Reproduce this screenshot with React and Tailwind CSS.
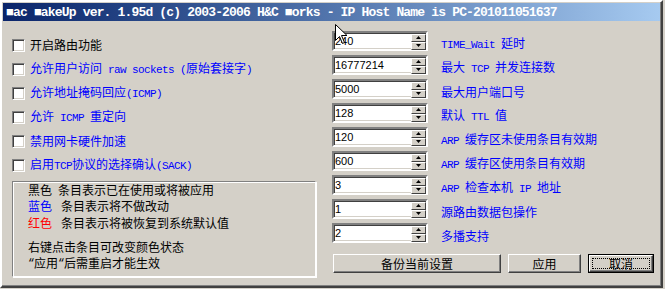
import React from 'react';

const MONO = "font-['Liberation_Mono','DejaVu_Sans_Mono',monospace] text-[11px] tracking-[-0.6px]";

// ASCII runs are set in a narrow mono face, the rest in the CJK face
const Mixed = ({ text }) =>
  text.split(/([\x20-\x7e\u201c\u201d]+)/).map((part, i) =>
    /[\x20-\x7e\u201c\u201d]/.test(part) ? (
      <span key={i} className={MONO}>{part}</span>
    ) : (
      <React.Fragment key={i}>{part}</React.Fragment>
    )
  );

const Checkbox = () => (
  <div className="w-[13px] h-[13px] shrink-0 bg-white border border-t-[#808080] border-l-[#808080] border-r-white border-b-white shadow-[inset_1px_1px_0_#404040,inset_-1px_-1px_0_#d4d0c8]" />
);

const Arrow = ({ up }) => (
  <svg width="5" height="3" viewBox="0 0 5 3" className="block">
    {up ? <path d="M2.5 0 L5 3 L0 3 Z" fill="#000" /> : <path d="M0 0 L5 0 L2.5 3 Z" fill="#000" />}
  </svg>
);

const SpinHalf = ({ up }) => (
  <div className="h-[8px] w-[15px] flex items-center justify-center bg-[#d4d0c8] border border-t-white border-l-white border-r-[#404040] border-b-[#404040]">
    <Arrow up={up} />
  </div>
);

const SpinBox = ({ value }) => (
  <div className="w-[96px] h-[20px] shrink-0 border-2 border-t-[#808080] border-l-[#808080] border-r-white border-b-white">
    <div className="h-full flex items-center bg-white shadow-[inset_1px_1px_0_#404040,inset_-1px_-1px_0_#d4d0c8] pt-[1px]">
      <span className="flex-1 pl-[1px] text-[11px] font-['Liberation_Sans',sans-serif] text-black leading-none">{value}</span>
      <div className="flex flex-col">
        <SpinHalf up />
        <SpinHalf />
      </div>
    </div>
  </div>
);

const Button = ({ label, width, isDefault }) =>
  isDefault ? (
    <div className={`${width} h-[19px] border border-black`}>
      <div className="h-full flex items-center justify-center border border-t-white border-l-white border-r-[#404040] border-b-[#404040] shadow-[inset_-1px_-1px_0_#808080] p-[2px]">
        <div className="w-full h-full flex items-center justify-center border border-dotted border-black">
          {label}
        </div>
      </div>
    </div>
  ) : (
    <div className={`${width} h-[19px] flex items-center justify-center border border-t-white border-l-white border-r-[#404040] border-b-[#404040] shadow-[inset_-1px_-1px_0_#808080]`}>
      {label}
    </div>
  );

const options = [
  { label: '开启路由功能', color: 'text-black' },
  { label: '允许用户访问 raw sockets (原始套接字)', color: 'text-[#0000ff]' },
  { label: '允许地址掩码回应(ICMP)', color: 'text-[#0000ff]' },
  { label: '允许 ICMP 重定向', color: 'text-[#0000ff]' },
  { label: '禁用网卡硬件加速', color: 'text-[#0000ff]' },
  { label: '启用TCP协议的选择确认(SACK)', color: 'text-[#0000ff]' },
];

const params = [
  { value: '240', label: 'TIME_Wait 延时' },
  { value: '16777214', label: '最大 TCP 并发连接数' },
  { value: '5000', label: '最大用户端口号' },
  { value: '128', label: '默认 TTL 值' },
  { value: '120', label: 'ARP 缓存区未使用条目有效期' },
  { value: '600', label: 'ARP 缓存区使用条目有效期' },
  { value: '3', label: 'ARP 检查本机 IP 地址' },
  { value: '1', label: '源路由数据包操作' },
  { value: '2', label: '多播支持' },
];

export default function App() {
  return (
    <div className="relative w-[665px] h-[289px] overflow-hidden bg-[#d4d0c8] font-['Noto_Sans_CJK_SC','Noto_Sans',sans-serif] text-[12px] text-black">
      <div className="w-[663px] h-[288px] flex flex-col p-[1px] border-2 border-t-white border-l-white border-r-[#404040] border-b-[#404040] shadow-[inset_-1px_-1px_0_#808080]">
        {/* title bar */}
        <div className="h-[18px] shrink-0 flex items-center pl-[3px] bg-linear-to-r from-[#0a246a] to-[#a6caf0]">
          <span className="font-['Liberation_Mono','DejaVu_Sans_Mono',monospace] text-[13px] tracking-[-0.83px] font-bold text-white leading-none whitespace-pre">
            ■ac ■akeUp ver. 1.95d (c) 2003-2006 H&amp;C ■orks - IP Host Name is PC-201011051637
          </span>
        </div>

        <div className="flex flex-1">
          {/* left column */}
          <div className="w-[329px] shrink-0 pt-[12px] pl-[9px]">
            {options.map((o, i) => (
              <div key={i} className="h-[24px] flex items-center gap-[5px]">
                <Checkbox />
                <span className={`${o.color} leading-none whitespace-pre`}>
                  <Mixed text={o.label} />
                </span>
              </div>
            ))}

            <div className="mt-[4px] w-[304px] h-[96px] border border-t-[#808080] border-l-[#808080] border-r-white border-b-white shadow-[inset_1px_1px_0_#fff,1px_1px_0_#fff] pl-[15px]">
              <div className="h-[16px] flex items-center">
                <span>黑色</span>
                <span className="ml-[6px]">条目表示已在使用或将被应用</span>
              </div>
              <div className="h-[16.5px] flex items-center">
                <span className="text-[#0000ff]">蓝色</span>
                <span className="ml-[9px]">条目表示将不做改动</span>
              </div>
              <div className="h-[16.5px] flex items-center">
                <span className="text-[#ff0000]">红色</span>
                <span className="ml-[9px]">条目表示将被恢复到系统默认值</span>
              </div>
              <div className="h-[16px] mt-[8px] flex items-center">右键点击条目可改变颜色状态</div>
              <div className="h-[16px] flex items-center whitespace-pre">
                <Mixed text="“应用“后需重启才能生效" />
              </div>
            </div>
          </div>

          {/* right column */}
          <div className="flex-1 pt-[8px]">
            {params.map((p, i) => (
              <div key={i} className="h-[24px] flex items-center">
                <SpinBox value={p.value} />
                <span className="ml-[13px] mt-[5px] text-[#0000ff] leading-none whitespace-pre">
                  <Mixed text={p.label} />
                </span>
              </div>
            ))}

            <div className="mt-[9px] ml-[1px] flex gap-[7px]">
              <Button label="备份当前设置" width="w-[168px]" />
              <Button label="应用" width="w-[73px]" />
              <Button label="取消" width="w-[66px]" isDefault />
            </div>
          </div>
        </div>
      </div>

      {/* mouse pointer */}
      <svg className="absolute left-[335px] top-[24px]" width="13" height="21" viewBox="0 0 13 21">
        <path d="M0.5 0.5 L0.5 16.5 L4.5 12.5 L7.5 19.5 L9.5 18.5 L6.5 11.5 L12 11.5 Z" fill="#fff" stroke="#000" strokeWidth="1" />
      </svg>
    </div>
  );
}
